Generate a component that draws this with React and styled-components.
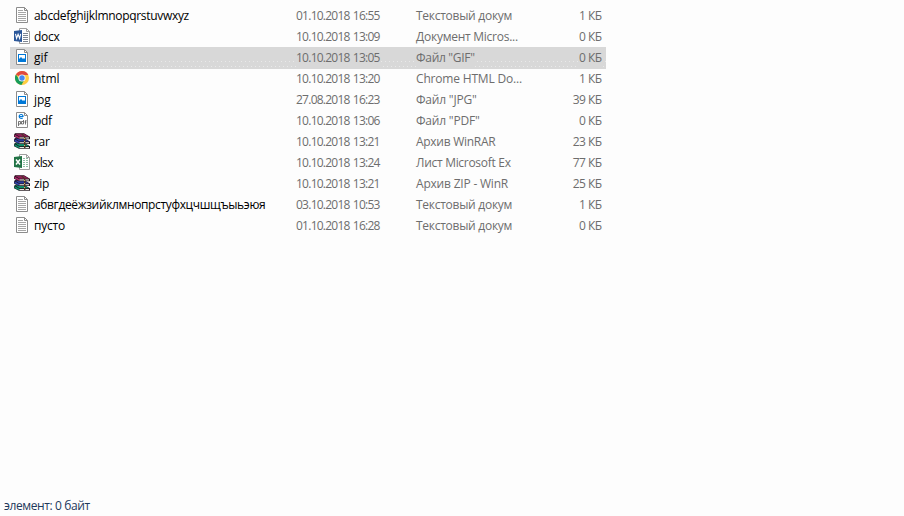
import React from 'react';
import styled, { createGlobalStyle } from 'styled-components';

const GlobalStyle = createGlobalStyle`
  * { box-sizing: border-box; }
  body { margin: 0; background: #fdfdfd; }
`;

const Window = styled.main`
  display: flex;
  flex-direction: column;
  justify-content: space-between;
  width: 904px;
  height: 516px;
  padding: 5px 0 0 10px;
  background: #fdfdfd;
  font: 12px/22px "Open Sans", "Noto Sans", sans-serif;
  overflow: hidden;
`;

const FileList = styled.div`
  display: flex;
  flex-direction: column;
  width: 596px;
`;

const Row = styled.div`
  display: grid;
  grid-template-columns: 24px 262px 120px 120px 1fr;
  height: 22px;
  margin-bottom: -1px;
  padding-right: 4px;
  color: #6d6d6d;
  white-space: nowrap;
  background: ${(p) => (p.$selected
    ? `conic-gradient(from 90deg at 3px 9px, #e9e9e9 25%, transparent 0) 40px 5px / 4px 10px repeat-x,
       conic-gradient(from 90deg at 3px 9px, #e9e9e9 25%, transparent 0) 42px 10px / 4px 10px repeat-x,
       #d8d8d8`
    : 'transparent')};
`;

const IconCell = styled.div`
  padding: 2px 0 0 4px;
  background: ${(p) => (p.$selected ? '#d8d8d8' : 'transparent')};
  svg { display: block; }
`;

const Text = styled.span`
  display: block;
  justify-self: start;
  height: 22px;
  letter-spacing: ${(p) => p.$track}px;
  background: ${(p) => (p.$selected ? '#d8d8d8' : 'transparent')};
`;

const Name = styled(Text)`
  color: #000;
`;

const DateText = styled(Text)`
  letter-spacing: -0.75px;
  word-spacing: 0.8px;
`;

const Size = styled(Text)`
  justify-self: end;
  padding-right: 0.5px;
  letter-spacing: -0.55px;
`;

const Status = styled.footer`
  height: 21px;
  margin-left: -6px;
  color: #1e395b;
  letter-spacing: -0.4px;
`;

const Icon = ({ children }) => (
  <svg width="16" height="16" viewBox="0 0 16 16">{children}</svg>
);

const Page = () => (
  <>
    <path d="M2.5.5h8l3 3v12h-11z" fill="#fff" stroke="#8c8c8c" />
    <path d="M10.5.5v3h3" fill="none" stroke="#8c8c8c" />
  </>
);

const TextIcon = () => (
  <Icon>
    <Page />
    <path d="M4 3.5h5M4 5.5h8M4 7.5h8M4 9.5h8M4 11.5h8M4 13.5h8" stroke="#a6a6a6" />
  </Icon>
);

const ImageIcon = () => (
  <Icon>
    <Page />
    <path d="M4 5h8v8H4z" fill="#0078d7" />
    <path d="M5 6h6v4l-1-1-1 1-2-2-2 2z" fill="#fff" />
  </Icon>
);

const OfficeIcon = ({ color, children }) => (
  <Icon>
    <path d="M5.5.5h7l3 3v12h-10z" fill="#fff" stroke="#a0a0a0" />
    <path d="M12.5.5v3h3" fill="none" stroke="#a0a0a0" />
    <path d="M0 3l8-1v12l-8-1z" fill={color} />
    {children}
  </Icon>
);

const WordIcon = () => (
  <OfficeIcon color="#2b579a">
    <path d="M9 5.5h5M9 7.5h5M9 9.5h5M9 11.5h5M9 13.5h5" stroke="#7e8794" />
    <path d="M1.5 5.8l1.1 4.5 1.5-4 1.5 4 1.1-4.5" fill="none" stroke="#fff" strokeWidth="1.1" />
  </OfficeIcon>
);

const ExcelIcon = () => (
  <OfficeIcon color="#217346">
    <path d="M9 4.5h2M12 4.5h2M9 6.5h2M12 6.5h2M9 8.5h2M12 8.5h2M9 10.5h2M12 10.5h2M9 12.5h2M12 12.5h2" stroke="#8fbfa5" />
    <path d="M2 5.5l4 5M6 5.5l-4 5" fill="none" stroke="#fff" strokeWidth="1.5" />
  </OfficeIcon>
);

const ChromeIcon = () => (
  <Icon>
    <circle cx="8" cy="8" r="7" fill="#ffcd42" />
    <path d="M8 8L1.9 4.5A7 7 0 0 1 14.3 5H8z" fill="#e04a3f" />
    <path d="M1.9 4.5A7 7 0 0 0 7.4 15l3.2-5.5L8 8 5.4 9.5z" fill="#179c5a" />
    <circle cx="8" cy="8" r="3.6" fill="#f5f5f5" />
    <circle cx="8" cy="8" r="2.7" fill="#4688f1" />
  </Icon>
);

const PdfIcon = () => (
  <Icon>
    <Page />
    <path d="M5 4.5h4C9 1.8 5.2 1.8 5.2 4.5c0 2 2.4 2.200 3.600 1.500" fill="none" stroke="#0078d7" strokeWidth="1.200" />
    <path d="M4.500 14V9.500h2v2.500h-2M9.500 8v4h-2V9.500h2M11.500 12.500V8.500h1M10.500 10h2" fill="none" stroke="#555" strokeWidth=".8" />
  </Icon>
);

const Book = ({ y, top, side }) => (
  <g transform={`translate(0 ${y})`}>
    <path d="M0 1.5L1 0h9l6 3.5V6H5L0 3.5z" fill="#1c1018" />
    <path d="M1 .5h9l5.200 3H5.500z" fill={top} />
    <path d="M.5 1.300L5.500 4v1.700L.5 3.300z" fill={side} />
    <path d="M5.500 4.200H15v1.100H5.500z" fill="#e8e4e0" />
  </g>
);

const ArchiveIcon = () => (
  <Icon>
    <Book y={9.8} top="#0f8a6a" side="#0f8a6a" />
    <Book y={5} top="#2c3f9c" side="#3348b0" />
    <Book y={0.2} top="#8c1f55" side="#a82a68" />
    <path d="M7 1h1.500l3 3v11H10V4z" fill="#4a3626" />
    <path d="M10 5h1v1h-1zM10 8h1v1h-1zM10 12h1v1h-1z" fill="#d9b45c" />
  </Icon>
);

const files = [
  { icon: TextIcon, name: 'abcdefghijklmnopqrstuvwxyz', track: -0.31, date: '01.10.2018 16:55', type: 'Текстовый докум', typeTrack: -0.27, size: '1 КБ' },
  { icon: WordIcon, name: 'docx', track: -0.25, date: '10.10.2018 13:09', type: 'Документ Micros...', typeTrack: -0.25, size: '0 КБ' },
  { icon: ImageIcon, name: 'gif', track: 0, date: '10.10.2018 13:05', type: 'Файл "GIF"', typeTrack: -0.3, size: '0 КБ', selected: true },
  { icon: ChromeIcon, name: 'html', track: -0.1, date: '10.10.2018 13:20', type: 'Chrome HTML Do...', typeTrack: -0.18, size: '1 КБ' },
  { icon: ImageIcon, name: 'jpg', track: 0, date: '27.08.2018 16:23', type: 'Файл "JPG"', typeTrack: -0.2, size: '39 КБ' },
  { icon: PdfIcon, name: 'pdf', track: -0.3, date: '10.10.2018 13:06', type: 'Файл "PDF"', typeTrack: -0.2, size: '0 КБ' },
  { icon: ArchiveIcon, name: 'rar', track: -0.3, date: '10.10.2018 13:21', type: 'Архив WinRAR', typeTrack: -0.28, size: '23 КБ' },
  { icon: ExcelIcon, name: 'xlsx', track: -0.6, date: '10.10.2018 13:24', type: 'Лист Microsoft Ex', typeTrack: -0.29, size: '77 КБ' },
  { icon: ArchiveIcon, name: 'zip', track: -0.3, date: '10.10.2018 13:21', type: 'Архив ZIP - WinR', typeTrack: -0.2, size: '25 КБ' },
  { icon: TextIcon, name: 'абвгдеёжзийклмнопрстуфхцчшщъыьэюя', track: -0.36, date: '03.10.2018 10:53', type: 'Текстовый докум', typeTrack: -0.27, size: '1 КБ' },
  { icon: TextIcon, name: 'пусто', track: -0.2, date: '01.10.2018 16:28', type: 'Текстовый докум', typeTrack: -0.27, size: '0 КБ' },
];

export default function App() {
  return (
    <>
      <GlobalStyle />
      <Window>
        <FileList>
          {files.map((f) => (
            <Row key={f.name} $selected={f.selected}>
              <IconCell $selected={f.selected}><f.icon /></IconCell>
              <Name $track={f.track} $selected={f.selected}>{f.name}</Name>
              <DateText $selected={f.selected}>{f.date}</DateText>
              <Text $track={f.typeTrack} $selected={f.selected}>{f.type}</Text>
              <Size $selected={f.selected}>{f.size}</Size>
            </Row>
          ))}
        </FileList>
        <Status>элемент: 0 байт</Status>
      </Window>
    </>
  );
}
